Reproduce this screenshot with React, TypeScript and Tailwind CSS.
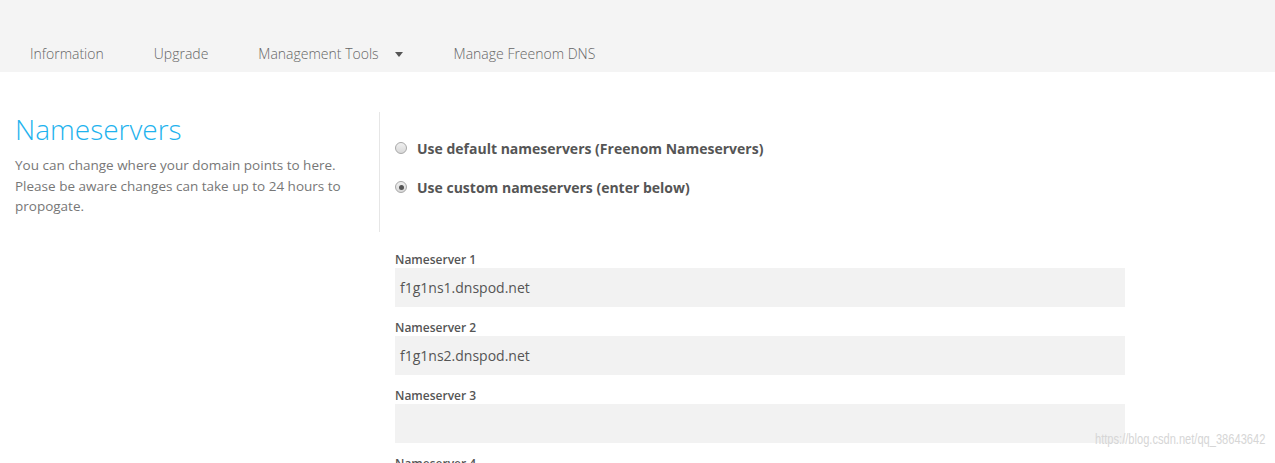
import React from "react";

function Radio({ checked }: { checked?: boolean }) {
  return (
    <span className="relative inline-flex h-[12px] w-[12px] shrink-0 items-center justify-center rounded-full border border-[#a8a8a8] bg-gradient-to-b from-[#f0f0f0] to-[#d8d8d8]">
      {checked && <span className="h-[5px] w-[5px] rounded-full bg-[#555]" />}
    </span>
  );
}

function Field({ label, value }: { label: string; value: string }) {
  return (
    <div className="flex flex-col">
      <div className="h-[17px] text-[12px] font-semibold leading-[17px] text-[#555]">{label}</div>
      <div className="flex h-[39px] w-[730px] items-center bg-[#f2f2f2] px-[5px] text-[14px] text-[#555]">
        {value}
      </div>
    </div>
  );
}

export default function App() {
  return (
    <div
      className="relative h-[463px] w-[1275px] overflow-hidden bg-white"
      style={{ fontFamily: '"Open Sans", "Noto Sans", sans-serif' }}
    >
      <div className="flex h-[72px] items-end bg-[#f4f4f4] pb-[7px] pl-[30px] text-[14px] font-light text-[#666]">
        <span className="mr-[50px] leading-[22px]">Information</span>
        <span className="mr-[50px] leading-[22px]">Upgrade</span>
        <span className="mr-[51px] flex items-center leading-[22px]">
          Management Tools
          <svg className="ml-[16px]" width="8" height="5" viewBox="0 0 8 5">
            <path d="M0 0 L8 0 L4 5 Z" fill="#555" />
          </svg>
        </span>
        <span className="leading-[22px]">Manage Freenom DNS</span>
      </div>

      <div className="flex pt-[40px]">
        <div className="w-[379px] shrink-0 pl-[15px] pr-[15px]">
          <h1 className="text-[28px] font-light leading-[34px] text-[#1fb3ee]">Nameservers</h1>
          <p className="mt-[9px] text-[13.5px] leading-[20.5px] text-[#777]">
            You can change where your domain points to here.
            <br />
            Please be aware changes can take up to 24 hours to propogate.
          </p>
        </div>
        <div className="flex flex-col">
          <div className="border-l border-[#e6e6e6] pl-[15px] pt-[25px] pb-[34px]">
            <div className="flex flex-col gap-[17px]">
              <label className="flex h-[22px] items-center gap-[10px] text-[14px] font-bold text-[#555]">
                <Radio />
                Use default nameservers (Freenom Nameservers)
              </label>
              <label className="flex h-[22px] items-center gap-[10px] text-[14px] font-bold text-[#555]">
                <Radio checked />
                Use custom nameservers (enter below)
              </label>
            </div>
          </div>
          <div className="flex flex-col gap-[12px] pl-[16px] pt-[19px]">
            <Field label="Nameserver 1" value="f1g1ns1.dnspod.net" />
            <Field label="Nameserver 2" value="f1g1ns2.dnspod.net" />
            <Field label="Nameserver 3" value="" />
            <Field label="Nameserver 4" value="" />
          </div>
        </div>
      </div>

      <div
        className="absolute left-[1095px] top-[428px] origin-left scale-x-[0.74] whitespace-nowrap text-[15px] text-[#d6d6d6]"
        style={{ fontFamily: '"Liberation Sans", sans-serif' }}
      >
        https://blog.csdn.net/qq_38643642
      </div>
    </div>
  );
}
